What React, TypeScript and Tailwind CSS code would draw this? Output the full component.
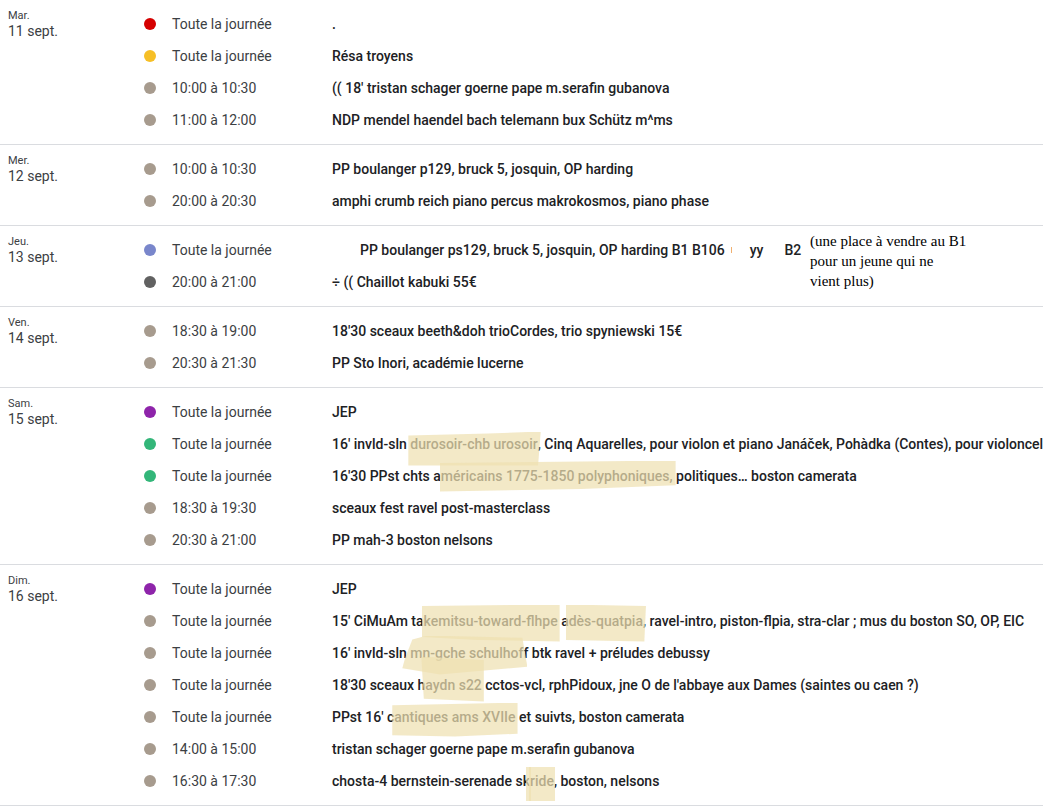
import React from "react";

type Ev = { color: string; time: string; title: React.ReactNode };
type Group = { day: string; date: string; events: Ev[]; extra?: React.ReactNode };

const HL = "absolute bg-[rgba(238,224,178,0.72)] pointer-events-none";

function Hl({ children, ov }: { children: React.ReactNode; ov: string }) {
  return (
    <span className="relative">
      {children}
      <span className={`${HL} ${ov}`} />
    </span>
  );
}

const RED = "bg-[#d50000]";
const YEL = "bg-[#f6bf26]";
const GRY = "bg-[#a79b8e]";
const LAV = "bg-[#7986cb]";
const DGR = "bg-[#616161]";
const PUR = "bg-[#8e24aa]";
const GRN = "bg-[#33b679]";

const TJ = "Toute la journée";

const groups: Group[] = [
  {
    day: "Mar.",
    date: "11 sept.",
    events: [
      { color: RED, time: TJ, title: "." },
      { color: YEL, time: TJ, title: "Résa troyens" },
      { color: GRY, time: "10:00 à 10:30", title: "(( 18' tristan schager goerne pape m.serafin gubanova" },
      { color: GRY, time: "11:00 à 12:00", title: "NDP mendel haendel bach telemann bux Schütz m^ms" },
    ],
  },
  {
    day: "Mer.",
    date: "12 sept.",
    events: [
      { color: GRY, time: "10:00 à 10:30", title: "PP boulanger p129, bruck 5, josquin, OP harding" },
      { color: GRY, time: "20:00 à 20:30", title: "amphi crumb reich piano percus makrokosmos, piano phase" },
    ],
  },
  {
    day: "Jeu.",
    date: "13 sept.",
    events: [
      {
        color: LAV,
        time: TJ,
        title: (
          <span className="inline-flex items-center">
            <span className="pl-[28px]">PP boulanger ps129, bruck 5, josquin, OP harding B1 B106</span>
            <span className="ml-[6px] inline-block h-[6px] w-[1px] bg-[#f0b070]" />
            <span className="ml-[18px]">yy</span>
            <span className="ml-[21px]">B2</span>
          </span>
        ),
      },
      { color: DGR, time: "20:00 à 21:00", title: "÷ (( Chaillot kabuki 55€" },
    ],
    extra: (
      <div className="absolute left-[810px] top-[5px] text-[15px] leading-[20px] text-black font-['Liberation_Serif',serif] whitespace-nowrap">
        <div>(une place à vendre au B1</div>
        <div>pour un jeune qui ne</div>
        <div>vient plus)</div>
      </div>
    ),
  },
  {
    day: "Ven.",
    date: "14 sept.",
    events: [
      { color: GRY, time: "18:30 à 19:00", title: "18'30 sceaux beeth&doh trioCordes, trio spyniewski 15€" },
      { color: GRY, time: "20:30 à 21:30", title: "PP Sto Inori, académie lucerne" },
    ],
  },
  {
    day: "Sam.",
    date: "15 sept.",
    events: [
      { color: PUR, time: TJ, title: "JEP" },
      {
        color: GRN,
        time: TJ,
        title: (
          <>
            16' invld-sln{" "}
            <Hl ov="-left-[2px] -right-[3px] -top-[4px] -bottom-[14px] [clip-path:polygon(0_12%,60%_6%,100%_0,98%_100%,0_100%)]">
              durosoir-chb urosoir
            </Hl>
            , Cinq Aquarelles, pour violon et piano Janáček, Pohàdka (Contes), pour violoncel
          </>
        ),
      },
      {
        color: GRN,
        time: TJ,
        title: (
          <>
            16'30 PPst chts a
            <Hl ov="-left-[1px] -right-[3px] -top-[7px] -bottom-[8px] [clip-path:polygon(0_8%,50%_4%,100%_0,100%_80%,60%_92%,0_100%)]">
              méricains 1775-1850 polyphoniques,
            </Hl>{" "}
            politiques… boston camerata
          </>
        ),
      },
      { color: GRY, time: "18:30 à 19:30", title: "sceaux fest ravel post-masterclass" },
      { color: GRY, time: "20:30 à 21:00", title: "PP mah-3 boston nelsons" },
    ],
  },
  {
    day: "Dim.",
    date: "16 sept.",
    events: [
      { color: PUR, time: TJ, title: "JEP" },
      {
        color: GRY,
        time: TJ,
        title: (
          <>
            15' CiMuAm ta
            <Hl ov="-left-[2px] -right-[2px] -top-[8px] -bottom-[13px] [clip-path:polygon(0_4%,100%_0,100%_100%,40%_96%,0_88%)]">
              kemitsu-toward-flhpe
            </Hl>{" "}
            a
            <Hl ov="-left-[3px] -right-[3px] -top-[8px] -bottom-[13px] [clip-path:polygon(0_0,100%_4%,98%_100%,0_96%)]">
              dès-quatpia
            </Hl>
            , ravel-intro, piston-flpia, stra-clar ; mus du boston SO, OP, EIC
          </>
        ),
      },
      {
        color: GRY,
        time: TJ,
        title: (
          <>
            16' invld-sln{" "}
            <Hl ov="-left-[8px] right-[-4px] -top-[9px] -bottom-[14px] [clip-path:polygon(8%_10%,20%_0,96%_6%,100%_80%,30%_100%,0_84%,2%_60%)]">
              mn-gche schulhof
            </Hl>
            f btk ravel + préludes debussy
          </>
        ),
      },
      {
        color: GRY,
        time: TJ,
        title: (
          <>
            18'30 sceaux h
            <Hl ov="-left-[4px] -right-[2px] -top-[20px] -bottom-[9px] [clip-path:polygon(0_0,100%_8%,100%_100%,4%_94%)]">
              aydn s22
            </Hl>{" "}
            cctos-vcl, rphPidoux, jne O de l'abbaye aux Dames (saintes ou caen ?)
          </>
        ),
      },
      {
        color: GRY,
        time: TJ,
        title: (
          <>
            PPst 16' c
            <Hl ov="-left-[2px] -right-[2px] -top-[6px] -bottom-[12px] [clip-path:polygon(0_8%,100%_0,100%_92%,50%_100%,0_96%)]">
              antiques ams XVIIe
            </Hl>{" "}
            et suivts, boston camerata
          </>
        ),
      },
      { color: GRY, time: "14:00 à 15:00", title: "tristan schager goerne pape m.serafin gubanova" },
      {
        color: GRY,
        time: "16:30 à 17:30",
        title: (
          <>
            chosta-4 bernstein-serenade s
            <span className="relative">
              k
              <span className={`${HL} left-[3px] -right-[1px] -top-[6px] -bottom-[12px]`} />
            </span>
            <Hl ov="-left-[1px] -right-[1px] -top-[6px] -bottom-[12px]">ride</Hl>
            , boston, nelsons
          </>
        ),
      },
    ],
  },
];

export default function App() {
  return (
    <div className="w-[1043px] h-[809px] overflow-hidden bg-white font-['Roboto',sans-serif] text-[14px]">
      {groups.map((g, gi) => (
        <div key={gi} className="relative flex border-b border-[#dadce0] pt-2 pb-2">
          <div className="w-[144px] shrink-0 pl-2 pt-[1px]">
            <div className="text-[11px] leading-[14px] text-[#3c4043]">{g.day}</div>
            <div className="text-[14px] leading-[16px] text-[#3c4043]">{g.date}</div>
          </div>
          <div className="flex flex-col">
            {g.events.map((e, ei) => (
              <div key={ei} className="flex h-8 items-center whitespace-nowrap">
                <span className={`h-3 w-3 shrink-0 rounded-full ${e.color}`} />
                <span className="ml-4 w-[160px] shrink-0 text-[#3c4043]">{e.time}</span>
                <span className="font-medium text-[#202124]">{e.title}</span>
              </div>
            ))}
          </div>
          {g.extra}
        </div>
      ))}
    </div>
  );
}
